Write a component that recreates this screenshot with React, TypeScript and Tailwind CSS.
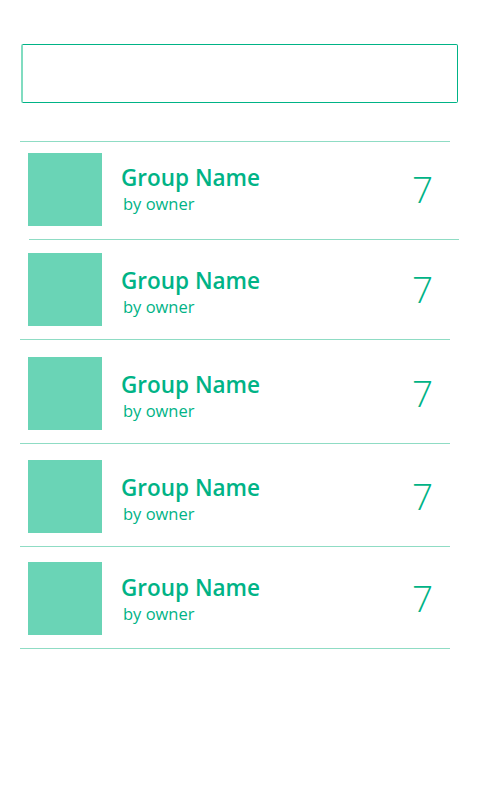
import React from "react";

const rows = [
  { pt: "pt-[11px]", tm: "-mt-[2px]" },
  { pt: "pt-[13px]", tm: "mt-[4px]" },
  { pt: "pt-[17px]", tm: "mt-[4px]" },
  { pt: "pt-[16px]", tm: "mt-[4px]" },
  { pt: "pt-[15px]", tm: "mt-0" },
];

const GroupRow = ({ pt, tm }: { pt: string; tm: string }) => (
  <div className={`flex items-center ${pt} pb-[13px] pl-2 pr-[18px]`}>
    <div className="w-[74px] h-[73px] shrink-0 bg-[#6ad4b6]"></div>
    <div className={`flex flex-col flex-1 pl-[19px] ${tm}`}>
      <span className="text-[22.5px] leading-[30px] font-semibold text-[#00b386]">Group Name</span>
      <span className="text-[16.5px] leading-[22px] pl-[2px] text-[#00b386]">by owner</span>
    </div>
    <span className="text-[37px] font-light leading-none text-[#00b386] -mt-[3px] mr-[-1px]">7</span>
  </div>
);

export default function App() {
  return (
    <div className="w-[480px] h-[800px] bg-white pt-11 px-5" style={{ fontFamily: '"Open Sans", "Noto Sans", sans-serif' }}>
      <div className="ml-px w-[437px] h-[59px] border border-[#00b386] border-l-2 border-l-[#80dcc0] rounded-[2px]"></div>
      <div className="mt-[38px] w-[430px]">
        {rows.map((r, i) => (
          <div key={i} className={i === 1 ? "border-t border-[#8fdcc4] -mr-[9px] ml-[9px]" : "border-t border-[#8fdcc4]"}>
            <div className={i === 1 ? "-ml-[9px] mr-[9px]" : ""}>
              <GroupRow pt={r.pt} tm={r.tm} />
            </div>
          </div>
        ))}
        <div className="border-t border-[#8fdcc4]"></div>
      </div>
    </div>
  );
}
